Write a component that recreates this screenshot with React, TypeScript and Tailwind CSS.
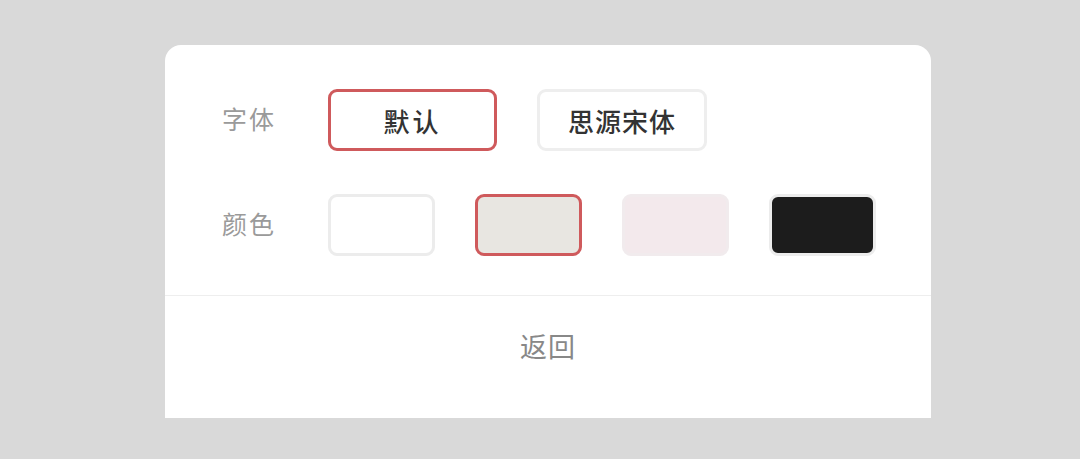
import React from "react";

const font = { fontFamily: '"Noto Sans CJK SC", "Noto Sans", sans-serif' };

export default function App() {
  const swatches = [
    { bg: "bg-white", border: "border-[#ececec]" },
    { bg: "bg-[#e8e6e1]", border: "border-[#cf5a5c]" },
    { bg: "bg-[#f3e9ec]", border: "border-[#f1ebed]" },
    { bg: "bg-[#1c1c1c]", border: "border-[#ececec]" },
  ];
  return (
    <div
      className="w-[1080px] h-[459px] bg-[#d9d9d9] pt-[45px] pl-[165px]"
      style={font}
    >
      <div className="w-[766px] h-[373px] bg-white rounded-t-[16px] flex flex-col">
        <div className="pt-[44px] pl-[57px] pb-[39px] flex flex-col gap-[43px]">
          <div className="flex items-center">
            <div className="w-[106px] mb-[3px] text-[25px] leading-none tracking-[2px] text-[#9a9a9a]">
              字体
            </div>
            <div className="flex gap-[40px]">
              <div className="w-[169px] h-[62px] rounded-[9px] border-[3px] border-[#cf5a5c] flex items-center justify-center text-[26px] font-medium tracking-[3px] text-[#333]">
                默认
              </div>
              <div className="w-[170px] h-[62px] rounded-[9px] border-[3px] border-[#eeeeee] flex items-center justify-center text-[26px] font-medium tracking-[1px] text-[#333]">
                思源宋体
              </div>
            </div>
          </div>
          <div className="flex items-center">
            <div className="w-[106px] mb-[3px] text-[25px] leading-none tracking-[2px] text-[#9a9a9a]">
              颜色
            </div>
            <div className="flex gap-[40px]">
              {swatches.map((s, i) => (
                <div
                  key={i}
                  className={`w-[107px] h-[62px] rounded-[9px] border-[3px] ${s.bg} ${s.border}`}
                />
              ))}
            </div>
          </div>
        </div>
        <div className="border-t border-[#eeeeee] flex-1 flex justify-center pt-[32px]">
          <div className="text-[27px] leading-[36px] tracking-[1px] text-[#888]">
            返回
          </div>
        </div>
      </div>
    </div>
  );
}
